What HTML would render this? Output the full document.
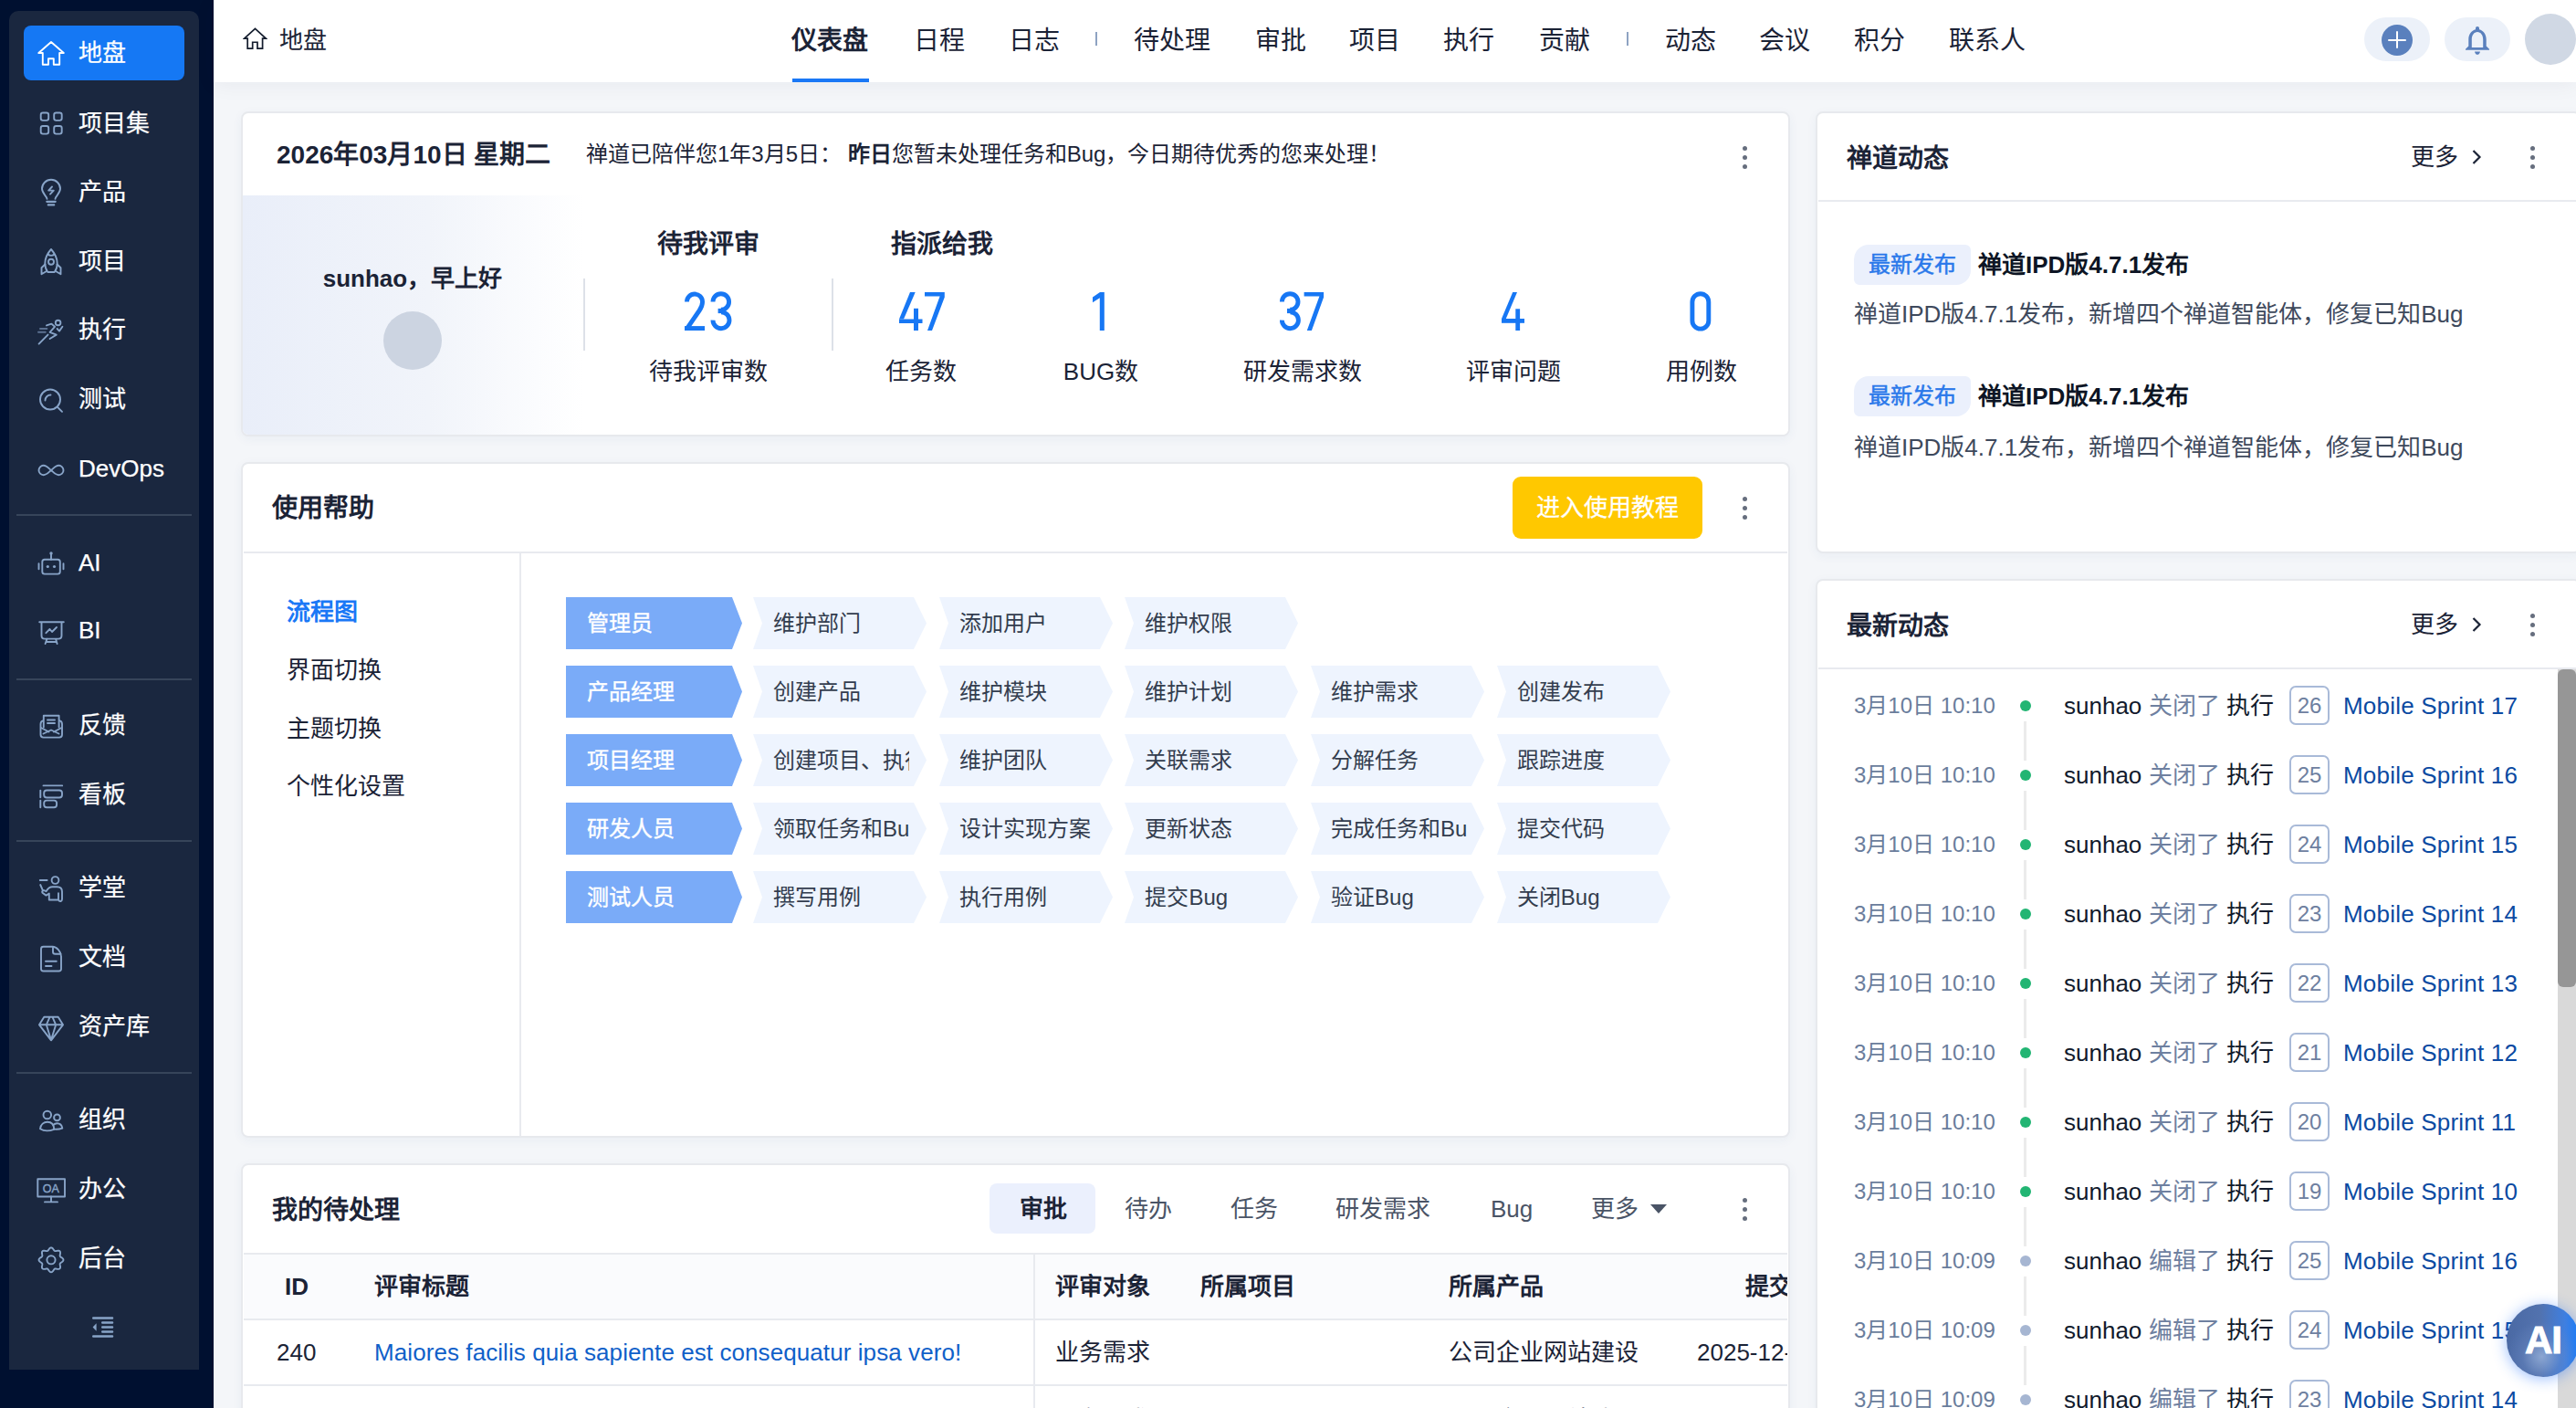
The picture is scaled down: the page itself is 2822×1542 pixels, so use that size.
<!DOCTYPE html><html lang="zh-CN"><head><meta charset="utf-8"><title>地盘</title><style>
*{box-sizing:border-box;margin:0;padding:0}
html,body{width:2822px;height:1542px;overflow:hidden;background:#f4f6f9;font-family:"Liberation Sans",sans-serif;color:#1b2336}
.a{position:absolute;white-space:nowrap}
.t{position:absolute;white-space:nowrap;height:40px;line-height:40px}
.b{font-weight:bold}
#side{position:absolute;left:0;top:0;width:234px;height:1542px;background:#001030}
#panel{position:absolute;left:10px;top:12px;width:208px;height:1488px;background:#1a273f;border-radius:10px 10px 0 0}
.si{position:absolute;left:43px;width:26px;height:26px}
.st{position:absolute;left:86px;height:40px;line-height:40px;color:#fff;font-size:26px;-webkit-text-stroke:.25px #fff;white-space:nowrap}
.sd{position:absolute;left:18px;width:192px;height:2px;background:#37455a}
#hdr{position:absolute;left:234px;top:0;width:2588px;height:90px;background:#fff;box-shadow:0 2px 22px rgba(20,30,60,.06)}
.nav{position:absolute;top:25px;height:40px;line-height:40px;font-size:28px;color:#1b2336;white-space:nowrap}
.sep{position:absolute;top:35px;width:2px;height:15px;background:#8ea3c2}
.pill{position:absolute;top:19px;width:72px;height:48px;border-radius:24px;background:#ecf1f9}
.card{position:absolute;background:#fff;border:2px solid #e7e9ed;border-radius:8px;overflow:hidden;box-shadow:0 3px 12px rgba(40,70,140,.05)}
.keb{position:absolute;width:4px;height:24px}
.keb i{position:absolute;left:0;width:5px;height:5px;border-radius:50%;background:#666e7e}
.num{position:absolute;height:70px;line-height:70px;font-size:62px;color:#1f78f0;transform:scaleX(.84);transform-origin:center;text-align:center;width:200px}
.lbl{position:absolute;height:40px;line-height:40px;font-size:26px;color:#1b2336;text-align:center;width:240px;white-space:nowrap}
.chev{position:absolute;height:57px;width:190px}
.chev span{position:absolute;top:0;height:57px;line-height:57px;font-size:24px;white-space:nowrap;overflow:hidden}
.tab{position:absolute;top:1304px;height:40px;line-height:40px;font-size:26px;color:#4a5466;white-space:nowrap}
.th{position:absolute;top:1389px;height:40px;line-height:40px;font-size:26px;font-weight:bold;color:#1b2336;white-space:nowrap}
.td{position:absolute;height:40px;line-height:40px;font-size:26px;color:#1b2336;white-space:nowrap}
.tl{position:absolute;height:40px;line-height:40px;white-space:nowrap}
</style></head><body>
<div id="side"><div id="panel"></div>
<div class="a" style="left:26px;top:28px;width:176px;height:60px;border-radius:8px;background:#1578f4"></div>
<div class="a" style="left:36px;top:38px;width:40px;height:40px"><svg viewBox="0 0 40 40" width="40" height="40" fill="none" stroke="#ffffff" stroke-width="1.9" stroke-linecap="round" stroke-linejoin="round"><path d="M20 8 L6.3 20 H10.8 V32.8 H17 V26.3 H22.8 V32.8 H29.2 V20 H33.8 Z"/></svg></div>
<div class="st" style="top:38px">地盘</div>
<div class="a" style="left:36px;top:115px;width:40px;height:40px"><svg viewBox="0 0 40 40" width="40" height="40" fill="none" stroke="#88a4c8" stroke-width="1.9" stroke-linecap="round" stroke-linejoin="round"><rect x="8.7" y="8.5" width="8.5" height="8.4" rx="2.3"/><rect x="23.2" y="8.5" width="8.5" height="8.4" rx="2.3"/><rect x="8.7" y="23" width="8.5" height="8.6" rx="2.3"/><rect x="23.2" y="23" width="8.5" height="8.6" rx="2.3"/></svg></div>
<div class="st" style="top:115px">项目集</div>
<div class="a" style="left:36px;top:190px;width:40px;height:40px"><svg viewBox="0 0 40 40" width="40" height="40" fill="none" stroke="#88a4c8" stroke-width="1.9" stroke-linecap="round" stroke-linejoin="round"><path d="M15.5 27.8 C15 24.5 10 21.5 10 16.8 A10 10 0 0 1 30 16.8 C30 21.5 25 24.5 24.5 27.8"/><path d="M15.3 30.8 H24.7 M16.8 34.4 H23.2" stroke-width="2.2"/><path d="M21 14.5 L17.2 18.6 H22.8 L19 22.6" stroke-width="1.9"/></svg></div>
<div class="st" style="top:190px">产品</div>
<div class="a" style="left:36px;top:266px;width:40px;height:40px"><svg viewBox="0 0 40 40" width="40" height="40" fill="none" stroke="#88a4c8" stroke-width="1.9" stroke-linecap="round" stroke-linejoin="round"><path d="M20 7 C15.5 12 13.3 17 13.3 22.5 C13.3 26.5 14.8 30 16.3 32 H23.7 C25.2 30 26.7 26.5 26.7 22.5 C26.7 17 24.5 12 20 7 Z"/><path d="M16.3 12.6 Q20 15.2 23.7 12.6"/><circle cx="20" cy="20.8" r="3"/><path d="M13.4 23.5 L9.5 27.3 V34.3 L15 31 M26.6 23.5 L30.5 27.3 V34.3 L25 31"/></svg></div>
<div class="st" style="top:266px">项目</div>
<div class="a" style="left:36px;top:341px;width:40px;height:40px"><svg viewBox="0 0 40 40" width="40" height="40" fill="none" stroke="#88a4c8" stroke-width="1.9" stroke-linecap="round" stroke-linejoin="round"><circle cx="27.6" cy="12.5" r="2.8"/><path d="M15 15.4 L20.4 13.6 L24 16.8 L18.6 22.8 L25.8 25.6 L18.6 30"/><path d="M26.6 19 L29 21.6 L32.4 16.8"/><path d="M6.6 35.6 L16.5 25.6"/><path d="M8 19 H15.4 M6 22.8 H13.8" opacity=".6"/></svg></div>
<div class="st" style="top:341px">执行</div>
<div class="a" style="left:36px;top:417px;width:40px;height:40px"><svg viewBox="0 0 40 40" width="40" height="40" fill="none" stroke="#88a4c8" stroke-width="1.9" stroke-linecap="round" stroke-linejoin="round"><circle cx="19" cy="20.5" r="11"/><path d="M27 28.8 L32 33.8"/><path d="M13.5 21.5 A6 6 0 0 1 19.5 15.5"/></svg></div>
<div class="st" style="top:417px">测试</div>
<div class="a" style="left:36px;top:493px;width:40px;height:40px"><svg viewBox="0 0 40 40" width="40" height="40" fill="none" stroke="#88a4c8" stroke-width="1.9" stroke-linecap="round" stroke-linejoin="round"><path d="M20 22 C17 19.5 15 16.8 11.7 16.8 A5.2 5.2 0 0 0 11.7 27.2 C15 27.2 17 24.5 20 22 C23 19.5 25 16.8 28.3 16.8 A5.2 5.2 0 0 1 28.3 27.2 C25 27.2 23 24.5 20 22 Z"/></svg></div>
<div class="st" style="top:493px">DevOps</div>
<div class="a" style="left:36px;top:596px;width:40px;height:40px"><svg viewBox="0 0 40 40" width="40" height="40" fill="none" stroke="#88a4c8" stroke-width="1.9" stroke-linecap="round" stroke-linejoin="round"><rect x="10.3" y="16.8" width="19.5" height="15.8" rx="2.6"/><path d="M20 10.5 V16.8 M6.5 21.3 V27.3 M33.5 21.3 V27.3"/><circle cx="20" cy="10" r="1.7" fill="#88a4c8" stroke="none"/><circle cx="16.3" cy="24.5" r="1.6" fill="#88a4c8" stroke="none"/><circle cx="23.5" cy="24.5" r="1.6" fill="#88a4c8" stroke="none"/></svg></div>
<div class="st" style="top:596px">AI</div>
<div class="a" style="left:36px;top:670px;width:40px;height:40px"><svg viewBox="0 0 40 40" width="40" height="40" fill="none" stroke="#88a4c8" stroke-width="1.9" stroke-linecap="round" stroke-linejoin="round"><path d="M7.2 11.3 H33.8 M9.5 11.3 V26 Q9.5 29.6 13 29.6 H28 Q31.5 29.6 31.5 26 V11.3 M15.5 29.6 L13.6 35 M25 29.6 L26.6 35 M14.8 33 H25.8"/><path d="M14.4 23.2 L18.5 19 L21 22 L26 17"/></svg></div>
<div class="st" style="top:670px">BI</div>
<div class="a" style="left:36px;top:774px;width:40px;height:40px"><svg viewBox="0 0 40 40" width="40" height="40" fill="none" stroke="#88a4c8" stroke-width="1.9" stroke-linecap="round" stroke-linejoin="round"><path d="M11 15.3 Q8.5 16 8.5 19 V30.5 Q8.5 33.6 11.6 33.6 H29 Q32 33.6 32 30.5 V19 Q32 16 29.5 15.3"/><path d="M11.8 22.5 V9.8 H28.6 V22.5"/><path d="M16 14.5 H24 M16 18 H24"/><path d="M9 23 L17.5 27.5 M31.5 23 L23 27.5 M11.5 29.5 L20 25.5 L28.5 29.5"/></svg></div>
<div class="st" style="top:774px">反馈</div>
<div class="a" style="left:36px;top:850px;width:40px;height:40px"><svg viewBox="0 0 40 40" width="40" height="40" fill="none" stroke="#88a4c8" stroke-width="1.9" stroke-linecap="round" stroke-linejoin="round"><path d="M11.5 10.4 H32.2 M8.3 15.6 V23.2 M8.3 26.6 V34.2"/><rect x="12.2" y="15.5" width="19.8" height="8" rx="3"/><rect x="12.2" y="26.6" width="13.9" height="7.6" rx="3"/></svg></div>
<div class="st" style="top:850px">看板</div>
<div class="a" style="left:36px;top:952px;width:40px;height:40px"><svg viewBox="0 0 40 40" width="40" height="40" fill="none" stroke="#88a4c8" stroke-width="1.9" stroke-linecap="round" stroke-linejoin="round"><circle cx="24.5" cy="12" r="3.9"/><path d="M7.8 12 H15.6"/><path d="M8.2 17 L11 23.4"/><path d="M17.8 26.6 V33.5 H28 Q29 35.5 30.6 35 Q32 34.5 32 32.8 V24.5 Q32 19.3 26.5 19.3 H21.5 Q17.5 19.3 14.5 24.2 L12 23 Q9.3 23.8 10.5 25.8 L14.5 28.6 Z M28 26.2 V33.5"/></svg></div>
<div class="st" style="top:952px">学堂</div>
<div class="a" style="left:36px;top:1028px;width:40px;height:40px"><svg viewBox="0 0 40 40" width="40" height="40" fill="none" stroke="#88a4c8" stroke-width="1.9" stroke-linecap="round" stroke-linejoin="round"><path d="M11.5 8.8 H21.5 C26 8.8 31 14 31 19.5 V33 Q31 35.5 28.5 35.5 H11.5 Q9 35.5 9 33 V11.3 Q9 8.8 11.5 8.8 Z"/><path d="M22 9.3 V14.5 Q22 16.8 24.5 16.8 H30.5"/><path d="M14 24.8 H25.8 M14 30 H20.5"/></svg></div>
<div class="st" style="top:1028px">文档</div>
<div class="a" style="left:36px;top:1104px;width:40px;height:40px"><svg viewBox="0 0 40 40" width="40" height="40" fill="none" stroke="#88a4c8" stroke-width="1.9" stroke-linecap="round" stroke-linejoin="round"><path d="M12.3 9.8 H27.7 L33 18.3 L20 35.3 L7 18.3 Z M7 18.3 H33 M18.5 9.8 L14.8 18.3 L20 35 L25.2 18.3 L21.5 9.8"/></svg></div>
<div class="st" style="top:1104px">资产库</div>
<div class="a" style="left:36px;top:1206px;width:40px;height:40px"><svg viewBox="0 0 40 40" width="40" height="40" fill="none" stroke="#88a4c8" stroke-width="1.9" stroke-linecap="round" stroke-linejoin="round"><circle cx="15.8" cy="15" r="4.3"/><circle cx="26.5" cy="17.9" r="3.4"/><path d="M8 30.3 C8.5 25.5 12 22.8 16 22.8 C20 22.8 23 25.5 23.2 30.8 C18 32.8 12 32.8 8 30.3 Z"/><path d="M22.3 26 C23.5 24.8 25 24.2 26.6 24.2 C29.5 24.2 31.8 26.5 32.3 29.6 C29.5 30.6 26.3 30.9 23.2 30.6"/></svg></div>
<div class="st" style="top:1206px">组织</div>
<div class="a" style="left:36px;top:1282px;width:40px;height:40px"><svg viewBox="0 0 40 40" width="40" height="40" fill="none" stroke="#88a4c8" stroke-width="1.9" stroke-linecap="round" stroke-linejoin="round"><rect x="5.3" y="9.2" width="29.7" height="19.3"/><path d="M20 28.5 V34.4 M13 34.4 H27"/><text x="19.9" y="23.8" font-size="12.5" text-anchor="middle" fill="#88a4c8" stroke="#88a4c8" stroke-width=".4" font-family="Liberation Sans" letter-spacing=".2">OA</text></svg></div>
<div class="st" style="top:1282px">办公</div>
<div class="a" style="left:36px;top:1358px;width:40px;height:40px"><svg viewBox="0 0 40 40" width="40" height="40" fill="none" stroke="#88a4c8" stroke-width="1.9" stroke-linecap="round" stroke-linejoin="round"><path d="M20.00 8.35 L20.70 8.49 L21.36 8.90 L21.95 9.51 L22.46 10.21 L22.92 10.91 L23.35 11.50 L23.79 11.92 L24.30 12.13 L24.92 12.15 L25.64 12.04 L26.45 11.86 L27.32 11.73 L28.16 11.72 L28.92 11.90 L29.51 12.29 L29.90 12.88 L30.08 13.64 L30.07 14.48 L29.94 15.35 L29.76 16.16 L29.65 16.88 L29.67 17.50 L29.88 18.01 L30.30 18.45 L30.89 18.88 L31.59 19.34 L32.29 19.85 L32.90 20.44 L33.31 21.10 L33.45 21.80 L33.31 22.50 L32.90 23.16 L32.29 23.75 L31.59 24.26 L30.89 24.72 L30.30 25.15 L29.88 25.59 L29.67 26.10 L29.65 26.72 L29.76 27.44 L29.94 28.25 L30.07 29.12 L30.08 29.96 L29.90 30.72 L29.51 31.31 L28.92 31.70 L28.16 31.88 L27.32 31.87 L26.45 31.74 L25.64 31.56 L24.92 31.45 L24.30 31.47 L23.79 31.68 L23.35 32.10 L22.92 32.69 L22.46 33.39 L21.95 34.09 L21.36 34.70 L20.70 35.11 L20.00 35.25 L19.30 35.11 L18.64 34.70 L18.05 34.09 L17.54 33.39 L17.08 32.69 L16.65 32.10 L16.21 31.68 L15.70 31.47 L15.08 31.45 L14.36 31.56 L13.55 31.74 L12.68 31.87 L11.84 31.88 L11.08 31.70 L10.49 31.31 L10.10 30.72 L9.92 29.96 L9.93 29.12 L10.06 28.25 L10.24 27.44 L10.35 26.72 L10.33 26.10 L10.12 25.59 L9.70 25.15 L9.11 24.72 L8.41 24.26 L7.71 23.75 L7.10 23.16 L6.69 22.50 L6.55 21.80 L6.69 21.10 L7.10 20.44 L7.71 19.85 L8.41 19.34 L9.11 18.88 L9.70 18.45 L10.12 18.01 L10.33 17.50 L10.35 16.88 L10.24 16.16 L10.06 15.35 L9.93 14.48 L9.92 13.64 L10.10 12.88 L10.49 12.29 L11.08 11.90 L11.84 11.72 L12.68 11.73 L13.55 11.86 L14.36 12.04 L15.08 12.15 L15.70 12.13 L16.21 11.92 L16.65 11.50 L17.08 10.91 L17.54 10.21 L18.05 9.51 L18.64 8.90 L19.30 8.49 L20.00 8.35 Z"/><circle cx="20" cy="21.8" r="4.6"/></svg></div>
<div class="st" style="top:1358px">后台</div>
<div class="sd" style="top:563px"></div>
<div class="sd" style="top:743px"></div>
<div class="sd" style="top:920px"></div>
<div class="sd" style="top:1174px"></div>
<div class="a" style="left:92px;top:1433px;width:40px;height:40px"><svg viewBox="0 0 40 40" width="40" height="40" fill="none" stroke="#88a4c8" stroke-width="2.6" stroke-linecap="round"><path d="M10.3 10.5 H31 M20.3 15.5 H31 M20.3 20.5 H31 M20.3 25.5 H31 M10.3 30.5 H31"/><path d="M13.6 16.3 L9.6 20.5 L13.6 24.7 Z" fill="#88a4c8" stroke="none"/></svg></div>
</div>
<div id="hdr"></div>
<div class="a" style="left:266px;top:29px;width:27px;height:27px"><svg viewBox="0 0 26 26" width="27" height="27" fill="none" stroke="#141d2e" stroke-width="1.65" stroke-linejoin="miter"><path d="M13 2.3 L1.6 12.6 H5 V23.3 H10.3 V16.6 H15.4 V23.3 H20.8 V12.6 H24.3 Z"/></svg></div>
<div class="nav" style="left:306px;top:24px;font-size:26px">地盘</div>
<div class="nav b" style="left:867px">仪表盘</div>
<div class="nav" style="left:1001px">日程</div>
<div class="nav" style="left:1105px">日志</div>
<div class="nav" style="left:1242px">待处理</div>
<div class="nav" style="left:1375px">审批</div>
<div class="nav" style="left:1478px">项目</div>
<div class="nav" style="left:1581px">执行</div>
<div class="nav" style="left:1686px">贡献</div>
<div class="nav" style="left:1824px">动态</div>
<div class="nav" style="left:1927px">会议</div>
<div class="nav" style="left:2031px">积分</div>
<div class="nav" style="left:2135px">联系人</div>
<div class="a" style="left:868px;top:86px;width:84px;height:4px;background:#1a78f6"></div>
<div class="sep" style="left:1200px"></div><div class="sep" style="left:1782px"></div>
<div class="pill" style="left:2590px"></div><div class="pill" style="left:2678px"></div>
<div class="a" style="left:2609px;top:27px;width:34px;height:34px;border-radius:50%;background:#5a80bd"></div>
<div class="a" style="left:2624.7px;top:34.3px;width:2.6px;height:19px;border-radius:1.3px;background:#fff"></div><div class="a" style="left:2616.3px;top:42.5px;width:19.4px;height:2.6px;border-radius:1.3px;background:#fff"></div>
<div class="a" style="left:2694px;top:24px;width:40px;height:40px"><svg viewBox="0 0 40 40" width="40" height="40"><path fill="#5a80bd" fill-rule="evenodd" d="M20 5 C21.2 5 22 5.8 22 7 V8.3 C26.5 9.5 29.7 13.5 29.7 19 V26.5 L33 29.8 V30.8 H7 V29.8 L10.3 26.5 V19 C10.3 13.5 13.5 9.5 18 8.3 V7 C18 5.8 18.8 5 20 5 Z M13.8 28 H26.2 V19.5 C26.2 14.5 23.6 11 20 11 C16.4 11 13.8 14.5 13.8 19.5 Z M17 32.4 H23 C22.5 34.6 21.4 35.8 20 35.8 C18.6 35.8 17.5 34.6 17 32.4 Z"/></svg></div>
<div class="a" style="left:2766px;top:15px;width:56px;height:56px;border-radius:50%;background:#d0d8e4"></div>
<div class="card" style="left:264px;top:122px;width:1697px;height:356px">
<div class="a" style="left:0;top:90px;width:1697px;height:264px;background:linear-gradient(90deg,#e9eef9 0%,#f1f4fa 12%,#fbfcfe 19%,#ffffff 22%)"></div>
</div>
<div class="t b" style="left:303px;top:150px;font-size:28px">2026年03月10日 星期二</div>
<div class="t" style="left:642px;top:149px;font-size:24px">禅道已陪伴您1年3月5日： <b>昨日</b>您暂未处理任务和Bug，今日期待优秀的您来处理！</div>
<div class="keb" style="left:1909px;top:160px"><i style="top:0"></i><i style="top:10px"></i><i style="top:20px"></i></div>
<div class="t b" style="left:352px;top:285px;font-size:26px;width:200px;text-align:center">sunhao，早上好</div>
<div class="a" style="left:420px;top:341px;width:64px;height:64px;border-radius:50%;background:#ccd4e1"></div>
<div class="a" style="left:639px;top:305px;width:2px;height:79px;background:#dde1e8"></div>
<div class="a" style="left:911px;top:305px;width:2px;height:79px;background:#dde1e8"></div>
<div class="t b" style="left:720px;top:248px;font-size:28px">待我评审</div>
<div class="t b" style="left:976px;top:248px;font-size:28px">指派给我</div>
<div class="lbl" style="left:656px;top:387px">待我评审数</div>
<div class="lbl" style="left:889px;top:387px">任务数</div>
<div class="lbl" style="left:1086px;top:387px">BUG数</div>
<div class="lbl" style="left:1307px;top:387px">研发需求数</div>
<div class="lbl" style="left:1538px;top:387px">评审问题</div>
<div class="lbl" style="left:1744px;top:387px">用例数</div>
<svg class="a" style="left:700px;top:310px" width="1200" height="60" viewBox="700 310 1200 60"><g fill="none" stroke="#1777f4" stroke-width="4.9" stroke-linecap="butt" stroke-linejoin="miter">
<path d="M752.45 330.6 A8.55 8.55 0 0 1 769.55 330.6 C769.55 334.5 768.3 337 766.2 340 L752.9 359.3"/>
<path d="M781 330.5 A8.8 8.8 0 1 1 789.8 339.3 M790 341.7 A9 9 0 1 1 781 350.6"/>
<path d="M1404.4 330.5 A8.8 8.8 0 1 1 1413.2 339.3 M1413.4 341.7 A9 9 0 1 1 1404.4 350.6"/>
<rect x="1853.9" y="321.7" width="17.9" height="38.4" rx="8.95"/>
</g><g fill="#1777f4">
<rect x="750" y="357.1" width="22" height="4.9"/><rect x="786.6" y="337.9" width="4.6" height="5.2"/><rect x="1410" y="337.9" width="4.6" height="5.2"/>
<polygon points="997,320 1002.7,320 990,349.5 985,349.5"/><rect x="985" y="349.5" width="25.5" height="4.5"/><rect x="1001" y="337.8" width="5" height="24.2"/>
<polygon points="1013,320 1034.8,320 1034.8,325.5 1021,362 1016,362 1029.6,324.6 1013,324.6"/>
<polygon points="1197,325.5 1205,320 1209.8,320 1209.8,362 1204.8,362 1204.8,326.2 1197,331.2"/>
<polygon points="1428.6,320 1450.1,320 1450.1,325.5 1436.9,362 1431.8,362 1445.4,324.6 1428.6,324.6"/>
<polygon points="1657.2,320 1662,320 1649.8,349 1645,349"/><rect x="1645" y="349" width="25" height="4.8"/><rect x="1660.3" y="338.3" width="4.8" height="23.7"/>
</g></svg>
<div class="card" style="left:264px;top:506px;width:1697px;height:740px"></div>
<div class="t b" style="left:298px;top:537px;font-size:28px">使用帮助</div>
<div class="a" style="left:267px;top:604px;width:1691px;height:2px;background:#e8eaef"></div>
<div class="a" style="left:569px;top:606px;width:2px;height:638px;background:#e8eaef"></div>
<div class="a" style="left:1657px;top:522px;width:208px;height:68px;border-radius:9px;background:#ffc800;color:#fff;font-size:26px;line-height:68px;text-align:center;-webkit-text-stroke:.3px #fff">进入使用教程</div>
<div class="keb" style="left:1909px;top:544px"><i style="top:0"></i><i style="top:10px"></i><i style="top:20px"></i></div>
<div class="t" style="left:314px;top:650px;font-size:26px;color:#1a78f6;font-weight:bold">流程图</div>
<div class="t" style="left:314px;top:714px;font-size:26px;">界面切换</div>
<div class="t" style="left:314px;top:778px;font-size:26px;">主题切换</div>
<div class="t" style="left:314px;top:841px;font-size:26px;">个性化设置</div>
<div class="chev" style="left:620px;top:654px;width:193px"><svg width="193" height="57" style="position:absolute;left:0;top:0"><polygon points="0,0 182,0 193,28.5 182,57 0,57" fill="#7aabf8"/></svg><span style="left:23px;color:#fff;-webkit-text-stroke:.4px #fff">管理员</span></div>
<div class="chev" style="left:825.0px;top:654px"><svg width="190" height="57" style="position:absolute;left:0;top:0"><polygon points="0,0 176,0 190,28.5 176,57 0,57 10,28.5" fill="#eef4fe"/></svg><span style="left:22px;width:149px;color:#333d4e">维护部门</span></div>
<div class="chev" style="left:1028.7px;top:654px"><svg width="190" height="57" style="position:absolute;left:0;top:0"><polygon points="0,0 176,0 190,28.5 176,57 0,57 10,28.5" fill="#eef4fe"/></svg><span style="left:22px;width:149px;color:#333d4e">添加用户</span></div>
<div class="chev" style="left:1232.4px;top:654px"><svg width="190" height="57" style="position:absolute;left:0;top:0"><polygon points="0,0 176,0 190,28.5 176,57 0,57 10,28.5" fill="#eef4fe"/></svg><span style="left:22px;width:149px;color:#333d4e">维护权限</span></div>
<div class="chev" style="left:620px;top:729px;width:193px"><svg width="193" height="57" style="position:absolute;left:0;top:0"><polygon points="0,0 182,0 193,28.5 182,57 0,57" fill="#7aabf8"/></svg><span style="left:23px;color:#fff;-webkit-text-stroke:.4px #fff">产品经理</span></div>
<div class="chev" style="left:825.0px;top:729px"><svg width="190" height="57" style="position:absolute;left:0;top:0"><polygon points="0,0 176,0 190,28.5 176,57 0,57 10,28.5" fill="#eef4fe"/></svg><span style="left:22px;width:149px;color:#333d4e">创建产品</span></div>
<div class="chev" style="left:1028.7px;top:729px"><svg width="190" height="57" style="position:absolute;left:0;top:0"><polygon points="0,0 176,0 190,28.5 176,57 0,57 10,28.5" fill="#eef4fe"/></svg><span style="left:22px;width:149px;color:#333d4e">维护模块</span></div>
<div class="chev" style="left:1232.4px;top:729px"><svg width="190" height="57" style="position:absolute;left:0;top:0"><polygon points="0,0 176,0 190,28.5 176,57 0,57 10,28.5" fill="#eef4fe"/></svg><span style="left:22px;width:149px;color:#333d4e">维护计划</span></div>
<div class="chev" style="left:1436.1px;top:729px"><svg width="190" height="57" style="position:absolute;left:0;top:0"><polygon points="0,0 176,0 190,28.5 176,57 0,57 10,28.5" fill="#eef4fe"/></svg><span style="left:22px;width:149px;color:#333d4e">维护需求</span></div>
<div class="chev" style="left:1639.8px;top:729px"><svg width="190" height="57" style="position:absolute;left:0;top:0"><polygon points="0,0 176,0 190,28.5 176,57 0,57 10,28.5" fill="#eef4fe"/></svg><span style="left:22px;width:149px;color:#333d4e">创建发布</span></div>
<div class="chev" style="left:620px;top:804px;width:193px"><svg width="193" height="57" style="position:absolute;left:0;top:0"><polygon points="0,0 182,0 193,28.5 182,57 0,57" fill="#7aabf8"/></svg><span style="left:23px;color:#fff;-webkit-text-stroke:.4px #fff">项目经理</span></div>
<div class="chev" style="left:825.0px;top:804px"><svg width="190" height="57" style="position:absolute;left:0;top:0"><polygon points="0,0 176,0 190,28.5 176,57 0,57 10,28.5" fill="#eef4fe"/></svg><span style="left:22px;width:149px;color:#333d4e">创建项目、执行</span></div>
<div class="chev" style="left:1028.7px;top:804px"><svg width="190" height="57" style="position:absolute;left:0;top:0"><polygon points="0,0 176,0 190,28.5 176,57 0,57 10,28.5" fill="#eef4fe"/></svg><span style="left:22px;width:149px;color:#333d4e">维护团队</span></div>
<div class="chev" style="left:1232.4px;top:804px"><svg width="190" height="57" style="position:absolute;left:0;top:0"><polygon points="0,0 176,0 190,28.5 176,57 0,57 10,28.5" fill="#eef4fe"/></svg><span style="left:22px;width:149px;color:#333d4e">关联需求</span></div>
<div class="chev" style="left:1436.1px;top:804px"><svg width="190" height="57" style="position:absolute;left:0;top:0"><polygon points="0,0 176,0 190,28.5 176,57 0,57 10,28.5" fill="#eef4fe"/></svg><span style="left:22px;width:149px;color:#333d4e">分解任务</span></div>
<div class="chev" style="left:1639.8px;top:804px"><svg width="190" height="57" style="position:absolute;left:0;top:0"><polygon points="0,0 176,0 190,28.5 176,57 0,57 10,28.5" fill="#eef4fe"/></svg><span style="left:22px;width:149px;color:#333d4e">跟踪进度</span></div>
<div class="chev" style="left:620px;top:879px;width:193px"><svg width="193" height="57" style="position:absolute;left:0;top:0"><polygon points="0,0 182,0 193,28.5 182,57 0,57" fill="#7aabf8"/></svg><span style="left:23px;color:#fff;-webkit-text-stroke:.4px #fff">研发人员</span></div>
<div class="chev" style="left:825.0px;top:879px"><svg width="190" height="57" style="position:absolute;left:0;top:0"><polygon points="0,0 176,0 190,28.5 176,57 0,57 10,28.5" fill="#eef4fe"/></svg><span style="left:22px;width:149px;color:#333d4e">领取任务和Bug</span></div>
<div class="chev" style="left:1028.7px;top:879px"><svg width="190" height="57" style="position:absolute;left:0;top:0"><polygon points="0,0 176,0 190,28.5 176,57 0,57 10,28.5" fill="#eef4fe"/></svg><span style="left:22px;width:149px;color:#333d4e">设计实现方案</span></div>
<div class="chev" style="left:1232.4px;top:879px"><svg width="190" height="57" style="position:absolute;left:0;top:0"><polygon points="0,0 176,0 190,28.5 176,57 0,57 10,28.5" fill="#eef4fe"/></svg><span style="left:22px;width:149px;color:#333d4e">更新状态</span></div>
<div class="chev" style="left:1436.1px;top:879px"><svg width="190" height="57" style="position:absolute;left:0;top:0"><polygon points="0,0 176,0 190,28.5 176,57 0,57 10,28.5" fill="#eef4fe"/></svg><span style="left:22px;width:149px;color:#333d4e">完成任务和Bug</span></div>
<div class="chev" style="left:1639.8px;top:879px"><svg width="190" height="57" style="position:absolute;left:0;top:0"><polygon points="0,0 176,0 190,28.5 176,57 0,57 10,28.5" fill="#eef4fe"/></svg><span style="left:22px;width:149px;color:#333d4e">提交代码</span></div>
<div class="chev" style="left:620px;top:954px;width:193px"><svg width="193" height="57" style="position:absolute;left:0;top:0"><polygon points="0,0 182,0 193,28.5 182,57 0,57" fill="#7aabf8"/></svg><span style="left:23px;color:#fff;-webkit-text-stroke:.4px #fff">测试人员</span></div>
<div class="chev" style="left:825.0px;top:954px"><svg width="190" height="57" style="position:absolute;left:0;top:0"><polygon points="0,0 176,0 190,28.5 176,57 0,57 10,28.5" fill="#eef4fe"/></svg><span style="left:22px;width:149px;color:#333d4e">撰写用例</span></div>
<div class="chev" style="left:1028.7px;top:954px"><svg width="190" height="57" style="position:absolute;left:0;top:0"><polygon points="0,0 176,0 190,28.5 176,57 0,57 10,28.5" fill="#eef4fe"/></svg><span style="left:22px;width:149px;color:#333d4e">执行用例</span></div>
<div class="chev" style="left:1232.4px;top:954px"><svg width="190" height="57" style="position:absolute;left:0;top:0"><polygon points="0,0 176,0 190,28.5 176,57 0,57 10,28.5" fill="#eef4fe"/></svg><span style="left:22px;width:149px;color:#333d4e">提交Bug</span></div>
<div class="chev" style="left:1436.1px;top:954px"><svg width="190" height="57" style="position:absolute;left:0;top:0"><polygon points="0,0 176,0 190,28.5 176,57 0,57 10,28.5" fill="#eef4fe"/></svg><span style="left:22px;width:149px;color:#333d4e">验证Bug</span></div>
<div class="chev" style="left:1639.8px;top:954px"><svg width="190" height="57" style="position:absolute;left:0;top:0"><polygon points="0,0 176,0 190,28.5 176,57 0,57 10,28.5" fill="#eef4fe"/></svg><span style="left:22px;width:149px;color:#333d4e">关闭Bug</span></div>
<div class="card" style="left:264px;top:1274px;width:1697px;height:400px"></div>
<div class="t b" style="left:298px;top:1306px;font-size:28px">我的待处理</div>
<div class="a" style="left:1084px;top:1296px;width:116px;height:55px;border-radius:8px;background:#ebf0fd"></div>
<div class="tab b" style="left:1117px;color:#1b2336">审批</div>
<div class="tab" style="left:1232px">待办</div>
<div class="tab" style="left:1348px">任务</div>
<div class="tab" style="left:1463px">研发需求</div>
<div class="tab" style="left:1633px">Bug</div>
<div class="tab" style="left:1743px">更多</div>
<div class="a" style="left:1808px;top:1319px;width:0;height:0;border-left:9px solid transparent;border-right:9px solid transparent;border-top:10px solid #4a5466"></div>
<div class="keb" style="left:1909px;top:1312px"><i style="top:0"></i><i style="top:10px"></i><i style="top:20px"></i></div>
<div class="a" style="left:267px;top:1372px;width:1691px;height:2px;background:#e8eaef"></div>
<div class="a" style="left:267px;top:1374px;width:1691px;height:71px;background:#fafbfd"></div>
<div class="a" style="left:267px;top:1444px;width:1691px;height:2px;background:#e8eaef"></div>
<div class="a" style="left:267px;top:1516px;width:1691px;height:2px;background:#e8eaef"></div>
<div class="a" style="left:1132px;top:1374px;width:2px;height:170px;background:#e8eaef"></div>
<div style="position:absolute;left:267px;top:1374px;width:1691px;height:170px;overflow:hidden">
<div class="th" style="left:45px;top:15px">ID</div>
<div class="th" style="left:143px;top:15px">评审标题</div>
<div class="th" style="left:889px;top:15px">评审对象</div>
<div class="th" style="left:1048px;top:15px">所属项目</div>
<div class="th" style="left:1320px;top:15px">所属产品</div>
<div class="th" style="left:1645px;top:15px">提交时间</div>
<div class="td" style="left:36px;top:87px;color:#1b2336">240</div>
<div class="td" style="left:143px;top:87px;color:#1060c9"><span style="letter-spacing:.08px">Maiores facilis quia sapiente est consequatur ipsa vero!</span></div>
<div class="td" style="left:889px;top:87px;color:#1b2336">业务需求</div>
<div class="td" style="left:1320px;top:87px;color:#1b2336">公司企业网站建设</div>
<div class="td" style="left:1592px;top:87px;color:#1b2336">2025-12-29 10:00</div>
<div class="td" style="left:36px;top:161px;color:#1b2336">239</div>
<div class="td" style="left:143px;top:161px;color:#1060c9">Quae aperiam ut quia quod magnam</div>
<div class="td" style="left:889px;top:161px;color:#1b2336">业务需求</div>
<div class="td" style="left:1320px;top:161px;color:#1b2336">公司企业网站建设</div>
<div class="td" style="left:1592px;top:161px;color:#1b2336">2025-12-29 10:00</div>
</div>
<div class="card" style="left:1989px;top:122px;width:839px;height:484px"></div>
<div class="t b" style="left:2023px;top:154px;font-size:28px">禅道动态</div>
<div class="t" style="left:2641px;top:152px;font-size:26px">更多</div><div class="a" style="left:2707px;top:163px;width:12px;height:18px"><svg width="12" height="18" viewBox="0 0 12 18"><path d="M2.5 2 L9.5 9 L2.5 16" fill="none" stroke="#1b2336" stroke-width="2.2"/></svg></div><div class="keb" style="left:2772px;top:160px"><i style="top:0"></i><i style="top:10px"></i><i style="top:20px"></i></div>
<div class="a" style="left:1992px;top:219px;width:834px;height:2px;background:#e8eaef"></div>
<div class="a" style="left:2031px;top:268px;width:128px;height:44px;border-radius:16px 6px 16px 6px;background:#ebf0fc;color:#2a78ea;font-size:24px;line-height:44px;text-align:center;-webkit-text-stroke:.5px #2a78ea">最新发布</div>
<div class="t b" style="left:2167px;top:270px;font-size:26px;color:#0d1524">禅道IPD版4.7.1发布</div>
<div class="t" style="left:2031px;top:324px;font-size:26px;color:#3e495c">禅道IPD版4.7.1发布，新增四个禅道智能体，修复已知Bug</div>
<div class="a" style="left:2031px;top:412px;width:128px;height:44px;border-radius:16px 6px 16px 6px;background:#ebf0fc;color:#2a78ea;font-size:24px;line-height:44px;text-align:center;-webkit-text-stroke:.5px #2a78ea">最新发布</div>
<div class="t b" style="left:2167px;top:414px;font-size:26px;color:#0d1524">禅道IPD版4.7.1发布</div>
<div class="t" style="left:2031px;top:470px;font-size:26px;color:#3e495c">禅道IPD版4.7.1发布，新增四个禅道智能体，修复已知Bug</div>
<div class="card" style="left:1989px;top:634px;width:839px;height:1000px"></div>
<div class="t b" style="left:2023px;top:666px;font-size:28px">最新动态</div>
<div class="t" style="left:2641px;top:664px;font-size:26px">更多</div><div class="a" style="left:2707px;top:675px;width:12px;height:18px"><svg width="12" height="18" viewBox="0 0 12 18"><path d="M2.5 2 L9.5 9 L2.5 16" fill="none" stroke="#1b2336" stroke-width="2.2"/></svg></div><div class="keb" style="left:2772px;top:672px"><i style="top:0"></i><i style="top:10px"></i><i style="top:20px"></i></div>
<div class="a" style="left:1992px;top:731px;width:834px;height:2px;background:#e8eaef"></div>
<div class="a" style="left:2802px;top:733px;width:20px;height:809px;background:#d9d9d9"></div>
<div class="a" style="left:2802px;top:733px;width:20px;height:348px;background:#969696;border-radius:6px"></div>
<div class="tl" style="left:2031px;top:753px;font-size:24px;color:#6a7d9c">3月10日 10:10</div>
<div class="a" style="left:2213px;top:767px;width:12px;height:12px;border-radius:50%;background:#22b573"></div>
<div class="a" style="left:2217px;top:790px;width:3px;height:43px;background:#ebebeb"></div>
<div class="tl" style="left:2261px;top:753px;font-size:26px;color:#111a2c">sunhao <span style="color:#6e80a0">关闭了</span> 执行</div>
<div class="a" style="left:2508px;top:751px;width:44px;height:43px;border:2px solid #a9bad8;border-radius:7px;color:#6e80a0;font-size:24px;line-height:39px;text-align:center">26</div>
<div class="tl" style="left:2567px;top:753px;font-size:26px;color:#0b4aa2;letter-spacing:.2px">Mobile Sprint 17</div>
<div class="tl" style="left:2031px;top:829px;font-size:24px;color:#6a7d9c">3月10日 10:10</div>
<div class="a" style="left:2213px;top:843px;width:12px;height:12px;border-radius:50%;background:#22b573"></div>
<div class="a" style="left:2217px;top:866px;width:3px;height:43px;background:#ebebeb"></div>
<div class="tl" style="left:2261px;top:829px;font-size:26px;color:#111a2c">sunhao <span style="color:#6e80a0">关闭了</span> 执行</div>
<div class="a" style="left:2508px;top:827px;width:44px;height:43px;border:2px solid #a9bad8;border-radius:7px;color:#6e80a0;font-size:24px;line-height:39px;text-align:center">25</div>
<div class="tl" style="left:2567px;top:829px;font-size:26px;color:#0b4aa2;letter-spacing:.2px">Mobile Sprint 16</div>
<div class="tl" style="left:2031px;top:905px;font-size:24px;color:#6a7d9c">3月10日 10:10</div>
<div class="a" style="left:2213px;top:919px;width:12px;height:12px;border-radius:50%;background:#22b573"></div>
<div class="a" style="left:2217px;top:942px;width:3px;height:43px;background:#ebebeb"></div>
<div class="tl" style="left:2261px;top:905px;font-size:26px;color:#111a2c">sunhao <span style="color:#6e80a0">关闭了</span> 执行</div>
<div class="a" style="left:2508px;top:903px;width:44px;height:43px;border:2px solid #a9bad8;border-radius:7px;color:#6e80a0;font-size:24px;line-height:39px;text-align:center">24</div>
<div class="tl" style="left:2567px;top:905px;font-size:26px;color:#0b4aa2;letter-spacing:.2px">Mobile Sprint 15</div>
<div class="tl" style="left:2031px;top:981px;font-size:24px;color:#6a7d9c">3月10日 10:10</div>
<div class="a" style="left:2213px;top:995px;width:12px;height:12px;border-radius:50%;background:#22b573"></div>
<div class="a" style="left:2217px;top:1018px;width:3px;height:43px;background:#ebebeb"></div>
<div class="tl" style="left:2261px;top:981px;font-size:26px;color:#111a2c">sunhao <span style="color:#6e80a0">关闭了</span> 执行</div>
<div class="a" style="left:2508px;top:979px;width:44px;height:43px;border:2px solid #a9bad8;border-radius:7px;color:#6e80a0;font-size:24px;line-height:39px;text-align:center">23</div>
<div class="tl" style="left:2567px;top:981px;font-size:26px;color:#0b4aa2;letter-spacing:.2px">Mobile Sprint 14</div>
<div class="tl" style="left:2031px;top:1057px;font-size:24px;color:#6a7d9c">3月10日 10:10</div>
<div class="a" style="left:2213px;top:1071px;width:12px;height:12px;border-radius:50%;background:#22b573"></div>
<div class="a" style="left:2217px;top:1094px;width:3px;height:43px;background:#ebebeb"></div>
<div class="tl" style="left:2261px;top:1057px;font-size:26px;color:#111a2c">sunhao <span style="color:#6e80a0">关闭了</span> 执行</div>
<div class="a" style="left:2508px;top:1055px;width:44px;height:43px;border:2px solid #a9bad8;border-radius:7px;color:#6e80a0;font-size:24px;line-height:39px;text-align:center">22</div>
<div class="tl" style="left:2567px;top:1057px;font-size:26px;color:#0b4aa2;letter-spacing:.2px">Mobile Sprint 13</div>
<div class="tl" style="left:2031px;top:1133px;font-size:24px;color:#6a7d9c">3月10日 10:10</div>
<div class="a" style="left:2213px;top:1147px;width:12px;height:12px;border-radius:50%;background:#22b573"></div>
<div class="a" style="left:2217px;top:1170px;width:3px;height:43px;background:#ebebeb"></div>
<div class="tl" style="left:2261px;top:1133px;font-size:26px;color:#111a2c">sunhao <span style="color:#6e80a0">关闭了</span> 执行</div>
<div class="a" style="left:2508px;top:1131px;width:44px;height:43px;border:2px solid #a9bad8;border-radius:7px;color:#6e80a0;font-size:24px;line-height:39px;text-align:center">21</div>
<div class="tl" style="left:2567px;top:1133px;font-size:26px;color:#0b4aa2;letter-spacing:.2px">Mobile Sprint 12</div>
<div class="tl" style="left:2031px;top:1209px;font-size:24px;color:#6a7d9c">3月10日 10:10</div>
<div class="a" style="left:2213px;top:1223px;width:12px;height:12px;border-radius:50%;background:#22b573"></div>
<div class="a" style="left:2217px;top:1246px;width:3px;height:43px;background:#ebebeb"></div>
<div class="tl" style="left:2261px;top:1209px;font-size:26px;color:#111a2c">sunhao <span style="color:#6e80a0">关闭了</span> 执行</div>
<div class="a" style="left:2508px;top:1207px;width:44px;height:43px;border:2px solid #a9bad8;border-radius:7px;color:#6e80a0;font-size:24px;line-height:39px;text-align:center">20</div>
<div class="tl" style="left:2567px;top:1209px;font-size:26px;color:#0b4aa2;letter-spacing:.2px">Mobile Sprint 11</div>
<div class="tl" style="left:2031px;top:1285px;font-size:24px;color:#6a7d9c">3月10日 10:10</div>
<div class="a" style="left:2213px;top:1299px;width:12px;height:12px;border-radius:50%;background:#22b573"></div>
<div class="a" style="left:2217px;top:1322px;width:3px;height:43px;background:#ebebeb"></div>
<div class="tl" style="left:2261px;top:1285px;font-size:26px;color:#111a2c">sunhao <span style="color:#6e80a0">关闭了</span> 执行</div>
<div class="a" style="left:2508px;top:1283px;width:44px;height:43px;border:2px solid #a9bad8;border-radius:7px;color:#6e80a0;font-size:24px;line-height:39px;text-align:center">19</div>
<div class="tl" style="left:2567px;top:1285px;font-size:26px;color:#0b4aa2;letter-spacing:.2px">Mobile Sprint 10</div>
<div class="tl" style="left:2031px;top:1361px;font-size:24px;color:#6a7d9c">3月10日 10:09</div>
<div class="a" style="left:2213px;top:1375px;width:12px;height:12px;border-radius:50%;background:#a6b6d2"></div>
<div class="a" style="left:2217px;top:1398px;width:3px;height:43px;background:#ebebeb"></div>
<div class="tl" style="left:2261px;top:1361px;font-size:26px;color:#111a2c">sunhao <span style="color:#6e80a0">编辑了</span> 执行</div>
<div class="a" style="left:2508px;top:1359px;width:44px;height:43px;border:2px solid #a9bad8;border-radius:7px;color:#6e80a0;font-size:24px;line-height:39px;text-align:center">25</div>
<div class="tl" style="left:2567px;top:1361px;font-size:26px;color:#0b4aa2;letter-spacing:.2px">Mobile Sprint 16</div>
<div class="tl" style="left:2031px;top:1437px;font-size:24px;color:#6a7d9c">3月10日 10:09</div>
<div class="a" style="left:2213px;top:1451px;width:12px;height:12px;border-radius:50%;background:#a6b6d2"></div>
<div class="a" style="left:2217px;top:1474px;width:3px;height:43px;background:#ebebeb"></div>
<div class="tl" style="left:2261px;top:1437px;font-size:26px;color:#111a2c">sunhao <span style="color:#6e80a0">编辑了</span> 执行</div>
<div class="a" style="left:2508px;top:1435px;width:44px;height:43px;border:2px solid #a9bad8;border-radius:7px;color:#6e80a0;font-size:24px;line-height:39px;text-align:center">24</div>
<div class="tl" style="left:2567px;top:1437px;font-size:26px;color:#0b4aa2;letter-spacing:.2px">Mobile Sprint 15</div>
<div class="tl" style="left:2031px;top:1513px;font-size:24px;color:#6a7d9c">3月10日 10:09</div>
<div class="a" style="left:2213px;top:1527px;width:12px;height:12px;border-radius:50%;background:#a6b6d2"></div>
<div class="tl" style="left:2261px;top:1513px;font-size:26px;color:#111a2c">sunhao <span style="color:#6e80a0">编辑了</span> 执行</div>
<div class="a" style="left:2508px;top:1511px;width:44px;height:43px;border:2px solid #a9bad8;border-radius:7px;color:#6e80a0;font-size:24px;line-height:39px;text-align:center">23</div>
<div class="tl" style="left:2567px;top:1513px;font-size:26px;color:#0b4aa2;letter-spacing:.2px">Mobile Sprint 14</div>
<div class="a" style="left:2746px;top:1428px;width:80px;height:80px;border-radius:50%;background:radial-gradient(circle at 48% 72%,rgba(150,175,215,.85) 0%,rgba(110,140,195,.35) 30%,rgba(90,125,185,0) 55%),linear-gradient(90deg,#4a69a4 0%,#5272ae 45%,#3f7fe0 80%,#1a7cf8 100%);box-shadow:0 2px 16px rgba(30,110,255,.45);color:#fff;font-weight:bold;font-size:42px;line-height:80px;text-align:center;-webkit-text-stroke:1px #fff;letter-spacing:-1px">AI</div>
</body></html>
